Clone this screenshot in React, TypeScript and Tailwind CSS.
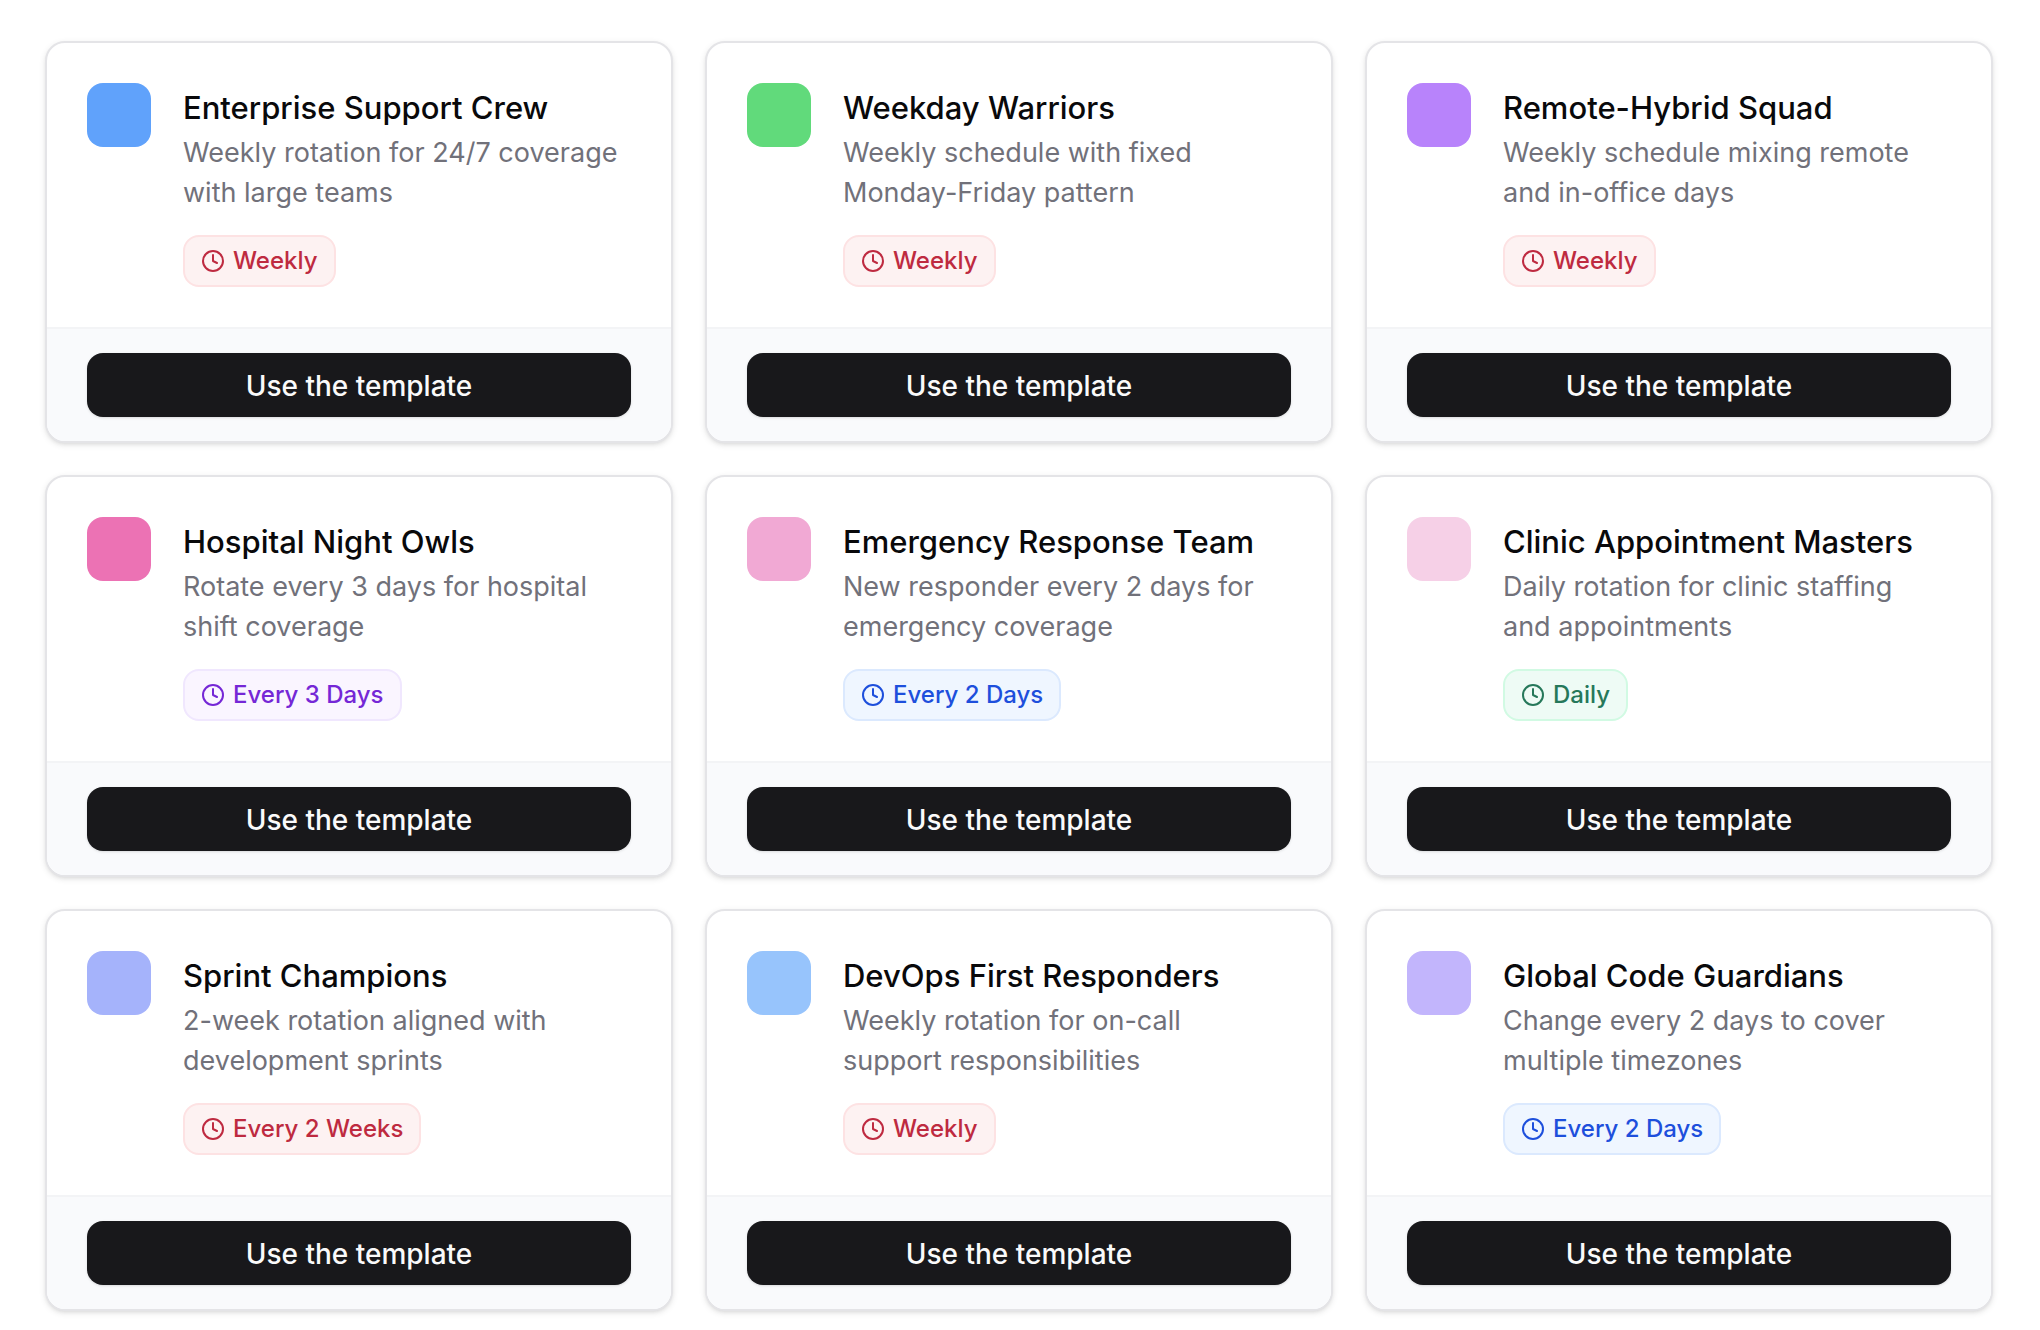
import { Clock } from 'lucide-react'

const tones = {
  red: 'border-[#fde2e3] bg-[#fdf2f2] text-[#be2a40]',
  purple: 'border-[#f0e7fe] bg-[#faf5ff] text-[#7527d6]',
  blue: 'border-[#dbe9fe] bg-[#eff6ff] text-[#1d4fdc]',
  green: 'border-[#d1fae3] bg-[#eefbf5] text-[#26785a]'
}

type Template = {
  title: string
  body: string
  color: string
  rotation: string
  tone: keyof typeof tones
}

const templates: Template[] = [
  { title: 'Enterprise Support Crew', body: 'Weekly rotation for 24/7 coverage with large teams', color: 'bg-[#60a2fb]', rotation: 'Weekly', tone: 'red' },
  { title: 'Weekday Warriors', body: 'Weekly schedule with fixed Monday-Friday pattern', color: 'bg-[#61da7b]', rotation: 'Weekly', tone: 'red' },
  { title: 'Remote-Hybrid Squad', body: 'Weekly schedule mixing remote and in-office days', color: 'bg-[#b883fb]', rotation: 'Weekly', tone: 'red' },
  { title: 'Hospital Night Owls', body: 'Rotate every 3 days for hospital shift coverage', color: 'bg-[#ec72b4]', rotation: 'Every 3 Days', tone: 'purple' },
  { title: 'Emergency Response Team', body: 'New responder every 2 days for emergency coverage', color: 'bg-[#f1a9d4]', rotation: 'Every 2 Days', tone: 'blue' },
  { title: 'Clinic Appointment Masters', body: 'Daily rotation for clinic staffing and appointments', color: 'bg-[#f6d0e7]', rotation: 'Daily', tone: 'green' },
  { title: 'Sprint Champions', body: '2-week rotation aligned with development sprints', color: 'bg-[#a5b3fb]', rotation: 'Every 2 Weeks', tone: 'red' },
  { title: 'DevOps First Responders', body: 'Weekly rotation for on-call support responsibilities', color: 'bg-[#97c4fc]', rotation: 'Weekly', tone: 'red' },
  { title: 'Global Code Guardians', body: 'Change every 2 days to cover multiple timezones', color: 'bg-[#c2b5fc]', rotation: 'Every 2 Days', tone: 'blue' }
]

function TemplateCard({ title, body, color, rotation, tone }: Template) {
  return (
    <article className="flex flex-col overflow-hidden rounded-[20px] border-2 border-[#e4e4e7] bg-white shadow-[0_2px_6px_rgba(0,0,0,0.1),0_2px_4px_-2px_rgba(0,0,0,0.1)]">
      <div className="flex flex-1 items-start gap-8 p-10">
        <div className={`size-16 shrink-0 rounded-2xl ${color}`} />
        <div className="min-w-0 flex-1">
          <h3 className="text-[31px] leading-[50px] font-medium text-[#09090b]">{title}</h3>
          <p className="pr-2 text-[27px] leading-10 text-[#71717a]">{body}</p>
          <span className={`mt-[22px] inline-flex h-[52px] items-center gap-2 rounded-2xl border-2 px-4 align-top text-2xl font-medium ${tones[tone]}`}>
            <Clock className="size-6" />
            {rotation}
          </span>
        </div>
      </div>
      <div className="border-t-2 border-[#f3f4f6] bg-[#f9fafc] px-10 py-6">
        <button type="button" className="h-16 w-full rounded-2xl bg-[#18181b] pt-0.5 text-[28px] font-medium text-[#fafafa] shadow-sm">
          Use the template
        </button>
      </div>
    </article>
  )
}

export default function App() {
  return (
    <main className="min-h-screen bg-white pt-[41px] pr-[47px] pb-5 pl-[45px] font-['Inter',sans-serif]">
      <div className="grid grid-cols-3 gap-8">
        {templates.map((t) => (
          <TemplateCard key={t.title} {...t} />
        ))}
      </div>
    </main>
  )
}
